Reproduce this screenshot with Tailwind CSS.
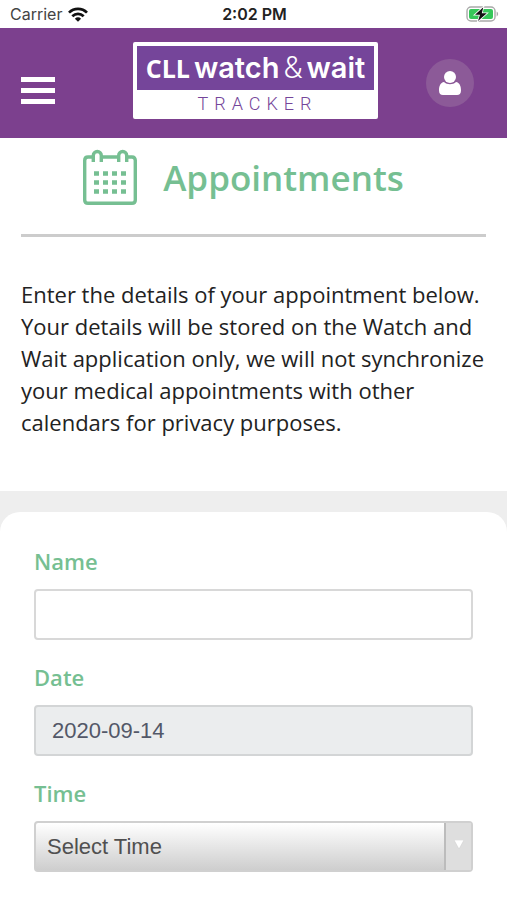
<!DOCTYPE html>
<html lang="en">
<head>
<meta charset="utf-8">
<meta name="viewport" content="width=device-width, initial-scale=1">
<title>Appointments</title>
<script src="https://cdn.jsdelivr.net/npm/@tailwindcss/browser@4"></script>
</head>
<body class="min-h-screen bg-white font-['Open_Sans',sans-serif] text-[#222222]">

<div class="grid h-7 grid-cols-[1fr_auto_1fr] items-center bg-white pr-2 pl-[10px] font-['Inter',sans-serif] text-base leading-7">
  <div class="flex items-center gap-[6px] text-[#444444]">
    <span>Carrier</span>
    <svg class="h-[15px] w-5" viewBox="0 0 20 15" fill="none" stroke="#111" stroke-width="2.7" aria-hidden="true">
      <path d="M1 5.6C6 .6 14 .6 19 5.6"/>
      <path d="M4.3 9.2C7.6 6 12.4 6 15.7 9.2"/>
      <path d="M6.9 11.7C8.7 9.9 11.3 9.9 13.1 11.7L10 14.8Z" fill="#111" stroke="none"/>
    </svg>
  </div>
  <span class="font-semibold text-[#222222]">2:02 PM</span>
  <svg class="h-4 w-[33px] justify-self-end" viewBox="0 0 33 16" role="img" aria-label="Battery charging">
    <rect x="1" y="1" width="28" height="14" rx="4" fill="none" stroke="#a9a9a9" stroke-width="1.4"/>
    <path d="M30.6 5.6C32.6 6.4 32.6 9.6 30.6 10.4Z" fill="#a9a9a9"/>
    <rect x="3" y="3" width="24" height="10" rx="2" fill="#35c759"/>
    <path d="M17.3 1.2L9 8.8H14L12 15L20.8 7.2H15.8Z" fill="#111" stroke="#fff" stroke-width="1.6" paint-order="stroke"/>
  </svg>
</div>

<header class="grid h-[110px] grid-cols-[1fr_auto_1fr] items-center bg-[#7c408e] pr-[17px] pl-[21px]">
  <button type="button" aria-label="Open menu" class="mt-[15px] flex w-[34px] flex-col gap-[6px]">
    <span class="h-[5px] bg-white"></span>
    <span class="h-[5px] bg-white"></span>
    <span class="h-[5px] bg-white"></span>
  </button>
  <a href="#" class="mb-[6px] block w-[245px] rounded-xs border-4 border-white bg-white text-white">
    <span class="flex h-11 items-center justify-center gap-1 bg-[#75459a] leading-[44px]">
      <span class="font-['Open_Sans',sans-serif] text-[25px] font-bold">CLL</span>
      <span class="font-['Inter',sans-serif] text-[29px] font-semibold">watch</span>
      <span class="font-['Roboto',sans-serif] text-[31px] font-light">&amp;</span>
      <span class="font-['Inter',sans-serif] text-[29px] font-semibold">wait</span>
    </span>
    <span class="block h-[25px] pl-1 text-center font-['Roboto',sans-serif] text-[18px] leading-7 font-light tracking-[6px] text-[#75459a]">TRACKER</span>
  </a>
  <button type="button" aria-label="Profile" class="mr-4 flex size-12 items-center justify-center justify-self-end rounded-full bg-[#8c5a98]">
    <svg class="h-6 w-[22px]" viewBox="0 0 22 24" fill="#fff" aria-hidden="true">
      <circle cx="11" cy="6" r="6"/>
      <path d="M5 11C8 14 14 14 17 11C20.500 11.500 22 15 22 19.500C22 22.500 20.500 24 18 24H4C1.500 24 0 22.500 0 19.500C0 15 1.500 11.500 5 11Z"/>
    </svg>
  </button>
</header>

<main>
  <section class="px-[21px] pb-[53px]">
    <div class="flex items-center justify-center gap-[26px] border-b-3 border-[#cccccc] pt-[11px] pr-5 pb-[29px] text-[#76bf92]">
      <svg class="h-14 w-[54px]" viewBox="0 0 54 56" fill="none" stroke="currentColor" stroke-width="3.400" aria-hidden="true">
        <path d="M10 8H5Q1.700 8 1.700 11.500V51Q1.700 54.300 5 54.300H49Q52.300 54.300 52.300 51V11.500Q52.300 8 49 8H44M18.500 8H35"/>
        <path d="M10.300 13V6.500A4 4 0 0 1 18.300 6.500V13M35.700 13V6.500A4 4 0 0 1 43.700 6.500V13"/>
        <path d="M11 24.500H43M11 33.500H43M11 42.500H43" stroke-width="4.600" stroke-dasharray="5 4"/>
      </svg>
      <h1 class="text-[35px] leading-[55px] font-semibold">Appointments</h1>
    </div>
    <p class="mt-[41px] text-[22px] leading-8">Enter the details of your appointment below. Your details will be stored on the Watch and Wait application only, we will not synchronize your medical appointments with other calendars for privacy purposes.</p>
  </section>

  <div class="bg-[#eeeeee] pt-[21px]">
    <form class="flex flex-col gap-[21px] rounded-t-[20px] bg-white px-[34px] pt-[33px] pb-7">
      <div class="flex flex-col gap-3">
        <label for="name" class="text-[22px] leading-8 font-semibold text-[#76bf92]">Name</label>
        <input id="name" type="text" class="h-[51px] w-full rounded-sm border-2 border-[#d8d8d8] bg-white px-4 font-['Liberation_Sans',sans-serif] text-[22px]">
      </div>
      <div class="flex flex-col gap-3">
        <label for="date" class="text-[22px] leading-8 font-semibold text-[#76bf92]">Date</label>
        <input id="date" type="text" readonly value="2020-09-14" class="h-[51px] w-full rounded-sm border-2 border-[#d3d5d6] bg-[#ebedee] px-4 font-['Liberation_Sans',sans-serif] text-[22px] text-[#535868]">
      </div>
      <div class="flex flex-col gap-3">
        <label for="time" class="text-[22px] leading-8 font-semibold text-[#76bf92]">Time</label>
        <div class="relative">
          <select id="time" class="h-[51px] w-full appearance-none rounded-sm border-2 border-[#d0d0d0] bg-linear-to-b from-white to-[#cecece] pl-[11px] font-['Liberation_Sans',sans-serif] text-[22px] text-[#505050]">
            <option>Select Time</option>
          </select>
          <span class="pointer-events-none absolute inset-y-[2px] right-[2px] flex w-[27px] items-center justify-center border-l-2 border-[#bcbcbc] bg-[#dedede]">
            <svg class="mb-1 h-[9px] w-[10px]" viewBox="0 0 10 9" aria-hidden="true"><path d="M0 0H10L5 9Z" fill="#fff" stroke="#cfcfcf" stroke-width=".5"/></svg>
          </span>
        </div>
      </div>
    </form>
  </div>
</main>
</body>
</html>
